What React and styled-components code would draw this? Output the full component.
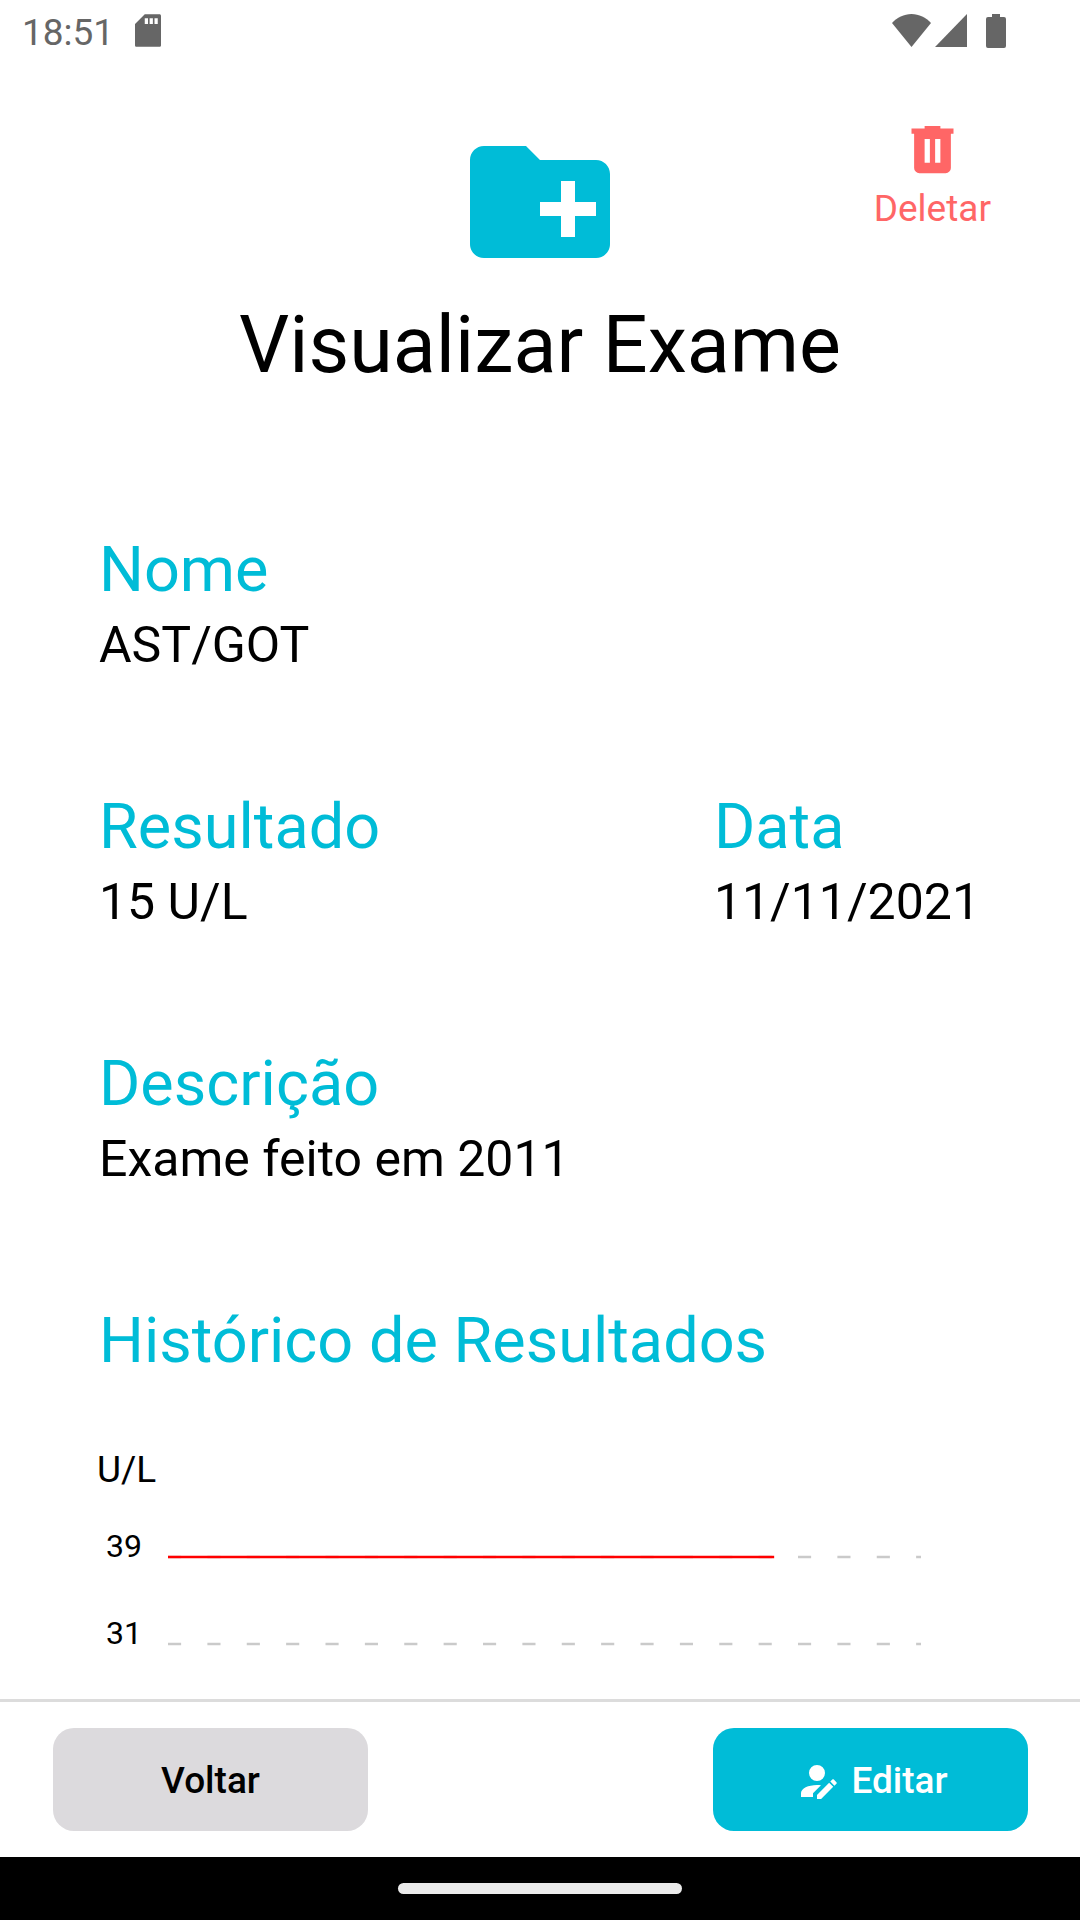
import React from "react";
import styled, { createGlobalStyle } from "styled-components";

const GlobalStyle = createGlobalStyle`
  *, *::before, *::after { box-sizing: border-box; }
  body { margin: 0; background: #fff; }
  body, button { font-family: Roboto, "Liberation Sans", sans-serif; }
  h1, h2, p, dl, dt, dd, ul { margin: 0; padding: 0; font-weight: 400; }
  svg { display: block; flex: none; }
`;

const cyan = "#00bcd7";

const Screen = styled.div`
  height: 100vh;
  display: flex;
  flex-direction: column;
  background: #fff;
  color: #000;
`;

const StatusBar = styled.div`
  flex: none;
  height: 64px;
  padding: 14px 74px 0 22px;
  display: flex;
  align-items: flex-start;
  justify-content: space-between;
  color: #666;
`;

const StatusGroup = styled.div`
  display: flex;
  align-items: flex-start;
  gap: ${({ $gap }) => $gap}px;
`;

const Clock = styled.time`
  font-size: 37px;
  line-height: 38px;
`;

const Content = styled.main`
  flex: 1;
  min-height: 0;
  overflow-y: auto;
`;

const Header = styled.header`
  padding: 54px 89px 0;
`;

const HeaderRow = styled.div`
  display: grid;
  grid-template-columns: 1fr auto 1fr;
  align-items: start;
`;

const FolderIcon = styled.svg`
  grid-column: 2;
  width: 168px;
  height: 168px;
  color: ${cyan};
`;

const DeleteButton = styled.button`
  grid-column: 3;
  justify-self: end;
  display: flex;
  flex-direction: column;
  align-items: center;
  gap: 6px;
  padding: 0;
  border: 0;
  background: none;
  color: #ff6666;
  font-size: 37px;
  line-height: 43px;
  cursor: pointer;
`;

const Title = styled.h1`
  margin-top: 12px;
  font-size: 79px;
  line-height: 94px;
  text-align: center;
`;

const Details = styled.dl`
  padding: 141px 100px 0 99px;
  display: flex;
  flex-direction: column;
  gap: 115px;
`;

const FieldRow = styled.div`
  display: flex;
  justify-content: space-between;
`;

const Field = styled.div`
  display: flex;
  flex-direction: column;
  gap: 8px;
`;

const FieldLabel = styled.dt`
  font-size: 63px;
  line-height: 74px;
  color: ${cyan};
`;

const FieldValue = styled.dd`
  font-size: 50px;
  line-height: 60px;
`;

const History = styled.section`
  padding: 115px 99px 0;
`;

const HistoryTitle = styled.h2`
  font-size: 63px;
  line-height: 74px;
  color: ${cyan};
`;

const Chart = styled.figure`
  margin: 70px 60px 0 -2px;
`;

const Unit = styled.figcaption`
  font-size: 37px;
  line-height: 44px;
`;

const Scale = styled.ul`
  margin-top: 36px;
  padding-left: 8px;
  list-style: none;
`;

const ScaleRow = styled.li`
  display: flex;
  gap: 26px;
  height: 87px;
`;

const Tick = styled.span`
  width: 37px;
  text-align: right;
  font-size: 32px;
  line-height: 37px;
`;

const GridLine = styled.svg`
  flex: 1;
  min-width: 0;
  height: 4px;
  margin-top: 27px;
`;

const ActionBar = styled.footer`
  flex: none;
  display: flex;
  justify-content: space-between;
  padding: 26px 52px 26px 53px;
  border-top: 3px solid #dcdcdc;
`;

const ActionButton = styled.button`
  width: 315px;
  height: 103px;
  display: flex;
  align-items: center;
  justify-content: center;
  gap: 10px;
  padding: 2px 0 0;
  border: 0;
  border-radius: 21px;
  background: ${({ $primary }) => ($primary ? cyan : "#dcdadd")};
  color: ${({ $primary }) => ($primary ? "#fff" : "#000")};
  font-size: 37px;
  font-weight: 500;
  line-height: 44px;
  cursor: pointer;
`;

const NavigationBar = styled.div`
  flex: none;
  height: 63px;
  display: flex;
  align-items: center;
  justify-content: center;
  background: #000;
`;

const NavigationHandle = styled.div`
  width: 284px;
  height: 11px;
  border-radius: 6px;
  background: #ebebeb;
`;

const readings = [
  { value: 39, limit: true },
  { value: 31, limit: false },
];

function DetailField({ label, children }) {
  return (
    <Field>
      <FieldLabel>{label}</FieldLabel>
      <FieldValue>{children}</FieldValue>
    </Field>
  );
}

export default function App() {
  return (
    <Screen>
      <GlobalStyle />
      <StatusBar>
        <StatusGroup $gap={21}>
          <Clock>18:51</Clock>
          <svg width="26" height="33" viewBox="4 2 16 20" fill="currentColor" aria-hidden="true">
            <path d="M19 2h-9L4 8v13c0 .6.4 1 1 1h14c.6 0 1-.4 1-1V3c0-.6-.4-1-1-1zm-7 6h-2V4.500h2zm3 0h-2V4.500h2zm3 0h-2V4.500h2z" />
          </svg>
        </StatusGroup>
        <StatusGroup $gap={19}>
          <StatusGroup $gap={4}>
            <svg width="39" height="33" viewBox="0 0 39 33" fill="currentColor" aria-hidden="true">
              <path d="M19.500 33 0 9C5 3.500 12 0 19.500 0S34 3.500 39 9z" />
            </svg>
            <svg width="32" height="33" viewBox="0 0 32 33" fill="currentColor" aria-hidden="true">
              <path d="M32 0v33H0z" />
            </svg>
          </StatusGroup>
          <svg width="20" height="34" viewBox="0 0 20 34" fill="currentColor" aria-hidden="true">
            <path d="M6 0h8v3h4a2 2 0 0 1 2 2v27a2 2 0 0 1-2 2H2a2 2 0 0 1-2-2V5a2 2 0 0 1 2-2h4z" />
          </svg>
        </StatusGroup>
      </StatusBar>

      <Content>
        <Header>
          <HeaderRow>
            <FolderIcon viewBox="0 0 24 24" fill="currentColor" aria-hidden="true">
              <path d="M20 6h-8l-2-2H4c-1.110 0-2 .89-2 2v12c0 1.110.89 2 2 2h16c1.110 0 2-.89 2-2V8c0-1.110-.89-2-2-2zm0 8h-3v3h-2v-3h-3v-2h3V9h2v3h3z" />
            </FolderIcon>
            <DeleteButton type="button">
              <svg width="63" height="63" viewBox="0 0 24 24" fill="currentColor" aria-hidden="true">
                <path d="M9 3v1H4v2h1v13a2 2 0 0 0 2 2h10a2 2 0 0 0 2-2V6h1V4h-5V3H9m0 5h2v9H9V8m4 0h2v9h-2V8z" />
              </svg>
              Deletar
            </DeleteButton>
          </HeaderRow>
          <Title>Visualizar Exame</Title>
        </Header>

        <Details>
          <DetailField label="Nome">AST/GOT</DetailField>
          <FieldRow>
            <DetailField label="Resultado">15 U/L</DetailField>
            <DetailField label="Data">11/11/2021</DetailField>
          </FieldRow>
          <DetailField label="Descrição">Exame feito em 2011</DetailField>
        </Details>

        <History>
          <HistoryTitle>Histórico de Resultados</HistoryTitle>
          <Chart>
            <Unit>U/L</Unit>
            <Scale>
              {readings.map(({ value, limit }) => (
                <ScaleRow key={value}>
                  <Tick>{value}</Tick>
                  <GridLine aria-hidden="true">
                    <line x1="0" y1="2" x2="100%" y2="2" stroke="#cacaca" strokeWidth="2.600" strokeDasharray="13.125 26.250" />
                    {limit && <line x1="0" y1="2" x2="80.500%" y2="2" stroke="#ff0000" strokeWidth="2.600" />}
                  </GridLine>
                </ScaleRow>
              ))}
            </Scale>
          </Chart>
        </History>
      </Content>

      <ActionBar>
        <ActionButton type="button">Voltar</ActionButton>
        <ActionButton type="button" $primary>
          <svg width="48" height="48" viewBox="0 0 24 24" fill="currentColor" aria-hidden="true">
            <path d="M21.700 13.350l-1 1-2.050-2.050 1-1c.21-.22.56-.22.77 0l1.280 1.280c.22.21.22.56 0 .77M12 18.940l6.060-6.060 2.050 2.050L14.060 21H12v-2.060M12 14c-4.420 0-8 1.790-8 4v2h6v-1.890l4-4c-.66-.08-1.330-.11-2-.11m0-10a4 4 0 1 0 0 8 4 4 0 0 0 0-8z" />
          </svg>
          Editar
        </ActionButton>
      </ActionBar>
      <NavigationBar>
        <NavigationHandle />
      </NavigationBar>
    </Screen>
  );
}
